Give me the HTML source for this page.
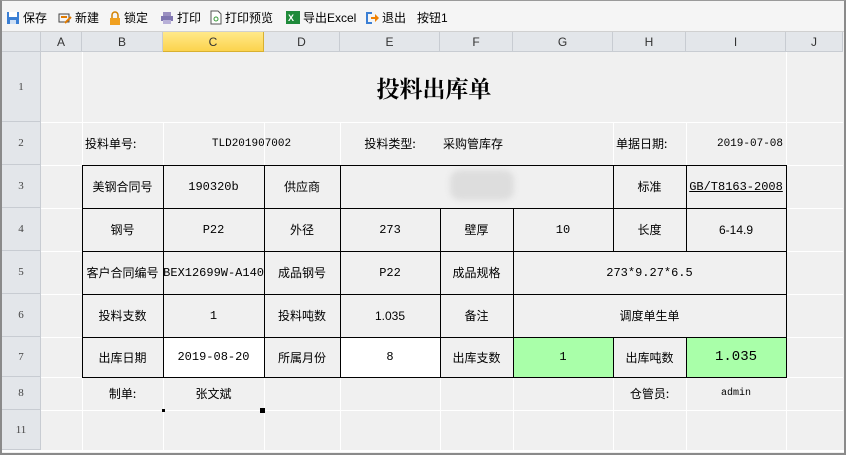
<!DOCTYPE html>
<html><head><meta charset="utf-8">
<style>
*{margin:0;padding:0;box-sizing:border-box}
body{width:846px;height:455px;background:#f0f0f0;font-family:"Liberation Sans","Noto Sans CJK SC",sans-serif;font-size:12px;color:#000;position:relative;overflow:hidden}
.a{position:absolute}
.tb{left:0;top:0;width:846px;height:32px;background:#f5f5f5;border:1px solid #9a9a9a;border-bottom:1px solid #d0d0d0}
.ti{position:absolute;top:9px;font-size:12px;display:flex;align-items:center;gap:3px}
.ch{top:32px;height:20px;background:#e3e6ea;border-right:1px solid #c8ccd2;border-bottom:1px solid #c8ccd2;text-align:center;line-height:20px;color:#333;font-size:12px}
.rh{left:2px;width:39px;background:#e3e6ea;border-bottom:1px solid #c8ccd2;border-right:1px solid #c8ccd2;text-align:center;color:#444;font-size:11px;font-family:"Liberation Serif",serif;display:flex;align-items:center;justify-content:center}
.vl{width:1px;background:#fff}
.hl{height:1px;background:#fff}
.c{position:absolute;display:flex;align-items:center;justify-content:center;text-align:center;white-space:nowrap;overflow:hidden;font-family:"Noto Sans CJK SC",sans-serif;font-size:12px}
.m{font-family:"Liberation Mono","Noto Sans CJK SC",monospace;font-size:12px}
.bx{border:1px solid #000;position:absolute}
.k{position:absolute;background:#000}
</style></head><body>
<div class="a tb"></div>
<div class="ti" style="left:6px"><svg width="14" height="14"><rect x="1" y="1" width="12" height="12" fill="#3b7fd4"/><rect x="3" y="1" width="8" height="5" fill="#fff"/><rect x="4" y="9" width="6" height="4" fill="#cfe0f5"/></svg>保存</div>
<div class="ti" style="left:58px"><svg width="14" height="14"><rect x="1" y="3" width="10" height="8" fill="none" stroke="#444"/><path d="M3 6h6M7 12l6-6" stroke="#e07a00" stroke-width="2"/></svg>新建</div>
<div class="ti" style="left:109px"><svg width="12" height="14"><path d="M3 7V4a3 3 0 0 1 6 0v3" fill="none" stroke="#d08000" stroke-width="1.5"/><rect x="1" y="7" width="10" height="7" fill="#f0a020"/></svg>锁定</div>
<div class="ti" style="left:160px"><svg width="14" height="14"><rect x="3" y="1" width="8" height="4" fill="#9a8fc0"/><rect x="1" y="5" width="12" height="5" fill="#7f76b0"/><rect x="3" y="9" width="8" height="4" fill="#b8b0d8"/></svg>打印</div>
<div class="ti" style="left:210px"><svg width="12" height="15"><path d="M1 1h7l3 3v10H1z" fill="#fff" stroke="#555"/><circle cx="6" cy="9" r="2" fill="none" stroke="#3a9a3a"/></svg>打印预览</div>
<div class="ti" style="left:286px"><svg width="14" height="13"><rect x="0" y="0" width="14" height="13" fill="#1f8a3a"/><text x="2" y="10" font-size="9" fill="#fff" font-family="Liberation Sans" font-weight="bold">X</text></svg>导出Excel</div>
<div class="ti" style="left:365px"><svg width="14" height="14"><path d="M1 1h6v2H3v8h4v2H1z" fill="#3b7fd4"/><path d="M6 6h4V3l4 4-4 4V8H6z" fill="#f08000"/></svg>退出</div>
<div class="ti" style="left:417px">按钮1</div>

<div class="a ch" style="left:2px;width:39px"></div>
<div class="a ch" style="left:41px;width:41px">A</div>
<div class="a ch" style="left:82px;width:81px">B</div>
<div class="a ch" style="left:163px;width:101px;background:linear-gradient(#ffe98a,#fcd34d);border-color:#d8b030">C</div>
<div class="a ch" style="left:264px;width:76px">D</div>
<div class="a ch" style="left:340px;width:100px">E</div>
<div class="a ch" style="left:440px;width:73px">F</div>
<div class="a ch" style="left:513px;width:100px">G</div>
<div class="a ch" style="left:613px;width:73px">H</div>
<div class="a ch" style="left:686px;width:100px">I</div>
<div class="a ch" style="left:786px;width:57px">J</div>

<div class="a rh" style="top:52px;height:70px">1</div>
<div class="a rh" style="top:122px;height:43px">2</div>
<div class="a rh" style="top:165px;height:43px">3</div>
<div class="a rh" style="top:208px;height:43px">4</div>
<div class="a rh" style="top:251px;height:43px">5</div>
<div class="a rh" style="top:294px;height:43px">6</div>
<div class="a rh" style="top:337px;height:40px">7</div>
<div class="a rh" style="top:377px;height:33px">8</div>
<div class="a rh" style="top:410px;height:40px">11</div>

<div class="a vl" style="left:82px;top:52px;height:398px"></div>
<div class="a vl" style="left:786px;top:52px;height:398px"></div>
<div class="a vl" style="left:163px;top:122px;height:328px"></div>
<div class="a vl" style="left:264px;top:122px;height:328px"></div>
<div class="a vl" style="left:340px;top:122px;height:328px"></div>
<div class="a vl" style="left:440px;top:377px;height:73px"></div>
<div class="a vl" style="left:513px;top:377px;height:73px"></div>
<div class="a vl" style="left:613px;top:122px;height:43px"></div>
<div class="a vl" style="left:686px;top:122px;height:43px"></div>
<div class="a vl" style="left:613px;top:377px;height:73px"></div>
<div class="a vl" style="left:686px;top:377px;height:73px"></div>
<div class="a hl" style="left:41px;top:122px;width:802px"></div>
<div class="a hl" style="left:41px;top:165px;width:802px"></div>
<div class="a hl" style="left:41px;top:208px;width:802px"></div>
<div class="a hl" style="left:41px;top:251px;width:802px"></div>
<div class="a hl" style="left:41px;top:294px;width:802px"></div>
<div class="a hl" style="left:41px;top:337px;width:802px"></div>
<div class="a hl" style="left:41px;top:377px;width:802px"></div>
<div class="a hl" style="left:41px;top:410px;width:802px"></div>

<div class="a" style="left:0;top:0;width:846px;height:455px;border:2px solid #8a8a8a;border-top:1px solid #9a9a9a;pointer-events:none"></div>
<div class="a" style="left:2px;top:450px;width:842px;height:2px;background:#fff"></div>

<div class="c" style="left:82px;top:52px;width:704px;height:70px;font-family:'Noto Serif CJK SC',serif;font-size:23px;font-weight:bold">投料出库单</div>

<div class="c" style="left:82px;top:122px;width:81px;height:43px;justify-content:flex-start;padding-left:3px">投料单号:</div>
<div class="c m" style="left:163px;top:122px;width:177px;height:43px;font-size:11px">TLD201907002</div>
<div class="c" style="left:340px;top:122px;width:100px;height:43px">投料类型:</div>
<div class="c" style="left:440px;top:122px;width:173px;height:43px;justify-content:flex-start;padding-left:3px">采购管库存</div>
<div class="c" style="left:613px;top:122px;width:73px;height:43px;justify-content:flex-start;padding-left:3px">单据日期:</div>
<div class="c m" style="left:686px;top:122px;width:100px;height:43px;justify-content:flex-end;padding-right:3px;font-size:11px">2019-07-08</div>

<div class="a" style="left:163px;top:337px;width:101px;height:40px;background:#fff"></div>
<div class="a" style="left:340px;top:337px;width:100px;height:40px;background:#fff"></div>
<div class="a" style="left:513px;top:337px;width:100px;height:40px;background:#a9ffa9"></div>
<div class="a" style="left:686px;top:337px;width:100px;height:40px;background:#a9ffa9"></div>
<div class="a" style="left:450px;top:170px;width:64px;height:30px;background:#ddd;border-radius:10px;filter:blur(3px)"></div>

<div class="bx" style="left:82px;top:165px;width:705px;height:213px"></div>
<div class="k" style="left:82px;top:208px;width:705px;height:1px"></div>
<div class="k" style="left:82px;top:251px;width:705px;height:1px"></div>
<div class="k" style="left:82px;top:294px;width:705px;height:1px"></div>
<div class="k" style="left:82px;top:337px;width:705px;height:1px"></div>
<div class="k" style="left:163px;top:165px;width:1px;height:212px"></div>
<div class="k" style="left:264px;top:165px;width:1px;height:212px"></div>
<div class="k" style="left:340px;top:165px;width:1px;height:212px"></div>
<div class="k" style="left:440px;top:208px;width:1px;height:169px"></div>
<div class="k" style="left:513px;top:208px;width:1px;height:169px"></div>
<div class="k" style="left:613px;top:165px;width:1px;height:86px"></div>
<div class="k" style="left:613px;top:337px;width:1px;height:40px"></div>
<div class="k" style="left:686px;top:165px;width:1px;height:86px"></div>
<div class="k" style="left:686px;top:337px;width:1px;height:40px"></div>

<div class="c" style="left:82px;top:165px;width:81px;height:43px">美钢合同号</div>
<div class="c m" style="left:163px;top:165px;width:101px;height:43px">190320b</div>
<div class="c" style="left:264px;top:165px;width:76px;height:43px">供应商</div>
<div class="c" style="left:613px;top:165px;width:73px;height:43px">标准</div>
<div class="c m" style="left:686px;top:165px;width:100px;height:43px;text-decoration:underline">GB/T8163-2008</div>

<div class="c" style="left:82px;top:208px;width:81px;height:43px">钢号</div>
<div class="c m" style="left:163px;top:208px;width:101px;height:43px">P22</div>
<div class="c" style="left:264px;top:208px;width:76px;height:43px">外径</div>
<div class="c m" style="left:340px;top:208px;width:100px;height:43px">273</div>
<div class="c" style="left:440px;top:208px;width:73px;height:43px">壁厚</div>
<div class="c m" style="left:513px;top:208px;width:100px;height:43px">10</div>
<div class="c" style="left:613px;top:208px;width:73px;height:43px">长度</div>
<div class="c" style="left:686px;top:208px;width:100px;height:43px;font-family:'Liberation Sans',sans-serif">6-14.9</div>

<div class="c" style="left:82px;top:251px;width:81px;height:43px">客户合同编号</div>
<div class="c m" style="left:163px;top:251px;width:101px;height:43px;justify-content:flex-end">BEX12699W-A140</div>
<div class="c" style="left:264px;top:251px;width:76px;height:43px">成品钢号</div>
<div class="c m" style="left:340px;top:251px;width:100px;height:43px">P22</div>
<div class="c" style="left:440px;top:251px;width:73px;height:43px">成品规格</div>
<div class="c m" style="left:513px;top:251px;width:273px;height:43px">273*9.27*6.5</div>

<div class="c" style="left:82px;top:294px;width:81px;height:43px">投料支数</div>
<div class="c m" style="left:163px;top:294px;width:101px;height:43px">1</div>
<div class="c" style="left:264px;top:294px;width:76px;height:43px">投料吨数</div>
<div class="c" style="left:340px;top:294px;width:100px;height:43px;font-family:'Liberation Sans',sans-serif">1.035</div>
<div class="c" style="left:440px;top:294px;width:73px;height:43px">备注</div>
<div class="c" style="left:513px;top:294px;width:273px;height:43px">调度单生单</div>

<div class="c" style="left:82px;top:337px;width:81px;height:40px">出库日期</div>
<div class="c m" style="left:163px;top:337px;width:101px;height:40px">2019-08-20</div>
<div class="c" style="left:264px;top:337px;width:76px;height:40px">所属月份</div>
<div class="c m" style="left:340px;top:337px;width:100px;height:40px">8</div>
<div class="c" style="left:440px;top:337px;width:73px;height:40px">出库支数</div>
<div class="c m" style="left:513px;top:337px;width:100px;height:40px">1</div>
<div class="c" style="left:613px;top:337px;width:73px;height:40px">出库吨数</div>
<div class="c m" style="left:686px;top:337px;width:100px;height:40px;font-size:14px">1.035</div>

<div class="c" style="left:82px;top:377px;width:81px;height:33px">制单:</div>
<div class="c" style="left:163px;top:377px;width:101px;height:33px">张文斌</div>
<div class="c" style="left:613px;top:377px;width:73px;height:33px">仓管员:</div>
<div class="c m" style="left:686px;top:377px;width:100px;height:33px;font-size:10px">admin</div>
<div class="a" style="left:162px;top:409px;width:3px;height:3px;background:#000"></div>
<div class="a" style="left:260px;top:408px;width:5px;height:5px;background:#000"></div>
</body></html>
